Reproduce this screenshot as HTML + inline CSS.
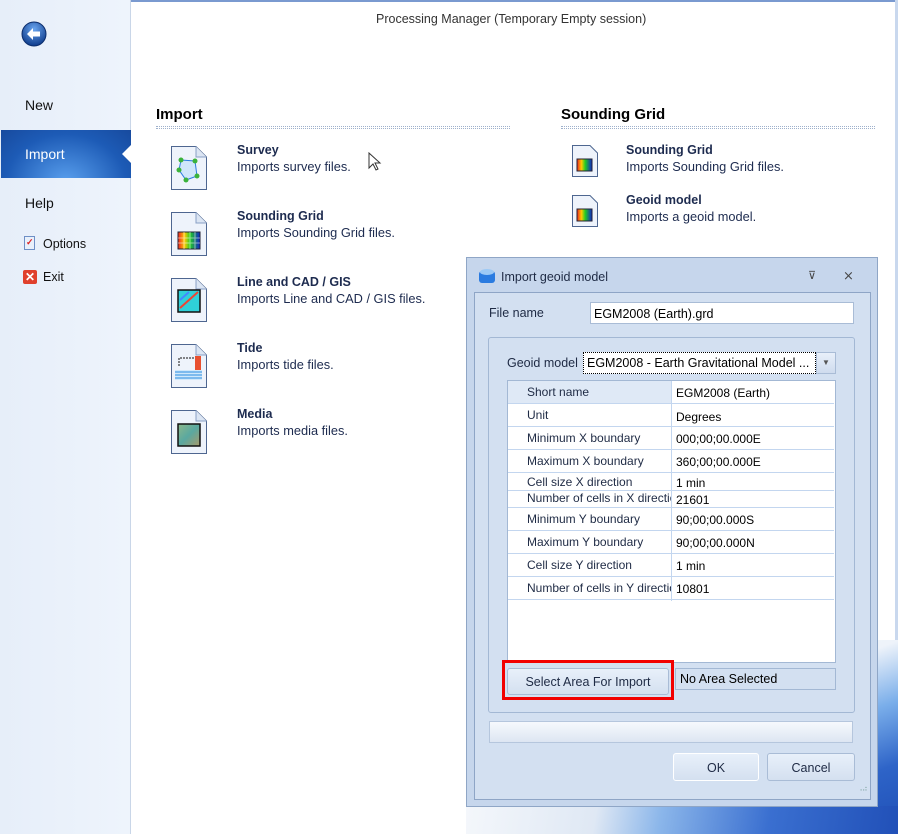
<!DOCTYPE html>
<html><head><style>
*{margin:0;padding:0;box-sizing:border-box}
body{width:898px;height:834px;position:relative;overflow:hidden;background:#fff;font-family:"Liberation Sans",sans-serif;font-size:12px;color:#1e2a44}
.a{position:absolute}
.side{left:0;top:0;width:131px;height:834px;background:linear-gradient(90deg,#e6eef9,#eef4fc);border-right:1px solid #c9d6e8}
.nav{left:25px;font-size:14px;color:#111}
.h{font-weight:bold;font-size:15px;color:#000}
.dots{height:3px;border-top:1px dotted #9fb1cc;border-bottom:1px dotted #9fb1cc}
.t{font-weight:bold;font-size:12.5px;color:#1d2b4f}
.d{font-size:12.8px;color:#1d2b4f}
.doc{width:36px;height:44px}
.row{left:508px;width:326px;border-bottom:1px solid #c3d6ef;font-size:12px;color:#1e2a44}
.row span{position:absolute;left:19px}
.row b{position:absolute;left:168px;font-weight:normal;color:#000}
.btn{background:linear-gradient(#e8f0fa,#d4e0f0);border:1px solid #a9bcd6;border-radius:3px;text-align:center;font-size:12.5px;color:#1e2a44}
</style></head><body>
<div class="a" style="left:0;top:0;width:898px;height:2px;background:#7a9ad0"></div>
<div class="a" style="right:0;top:0;width:3px;height:834px;background:#c9d8ee"></div>
<div class="a side"></div>
<svg class="a" style="left:20px;top:20px" width="28" height="28"><defs><radialGradient id="g" cx="50%" cy="30%" r="70%"><stop offset="0" stop-color="#6aa6f0"/><stop offset="1" stop-color="#0d3a8a"/></radialGradient></defs><circle cx="14" cy="14" r="12" fill="url(#g)" stroke="#0b2d6c"/><path d="M7 14 L13 8 V11.5 H20 V16.5 H13 V20 Z" fill="#fff"/></svg>
<div class="a nav" style="top:97px">New</div>
<div class="a" style="left:1px;top:130px;width:130px;height:48px;background:radial-gradient(ellipse at 50% 110%,#5aa0ee,#1d5bb6 65%,#174a9e)"></div>
<div class="a nav" style="top:146px;color:#fff">Import</div>
<div class="a" style="left:122px;top:145px;width:0;height:0;border-top:9px solid transparent;border-bottom:9px solid transparent;border-right:9px solid #fff"></div>
<div class="a nav" style="top:195px">Help</div>
<div class="a" style="left:24px;top:236px;width:11px;height:14px;background:#e8f0fb;border:1px solid #6e8fc6"></div>
<div class="a" style="left:26px;top:237px;font-size:9px;color:#d22;font-weight:bold">✓</div>
<div class="a" style="left:43px;top:237px;font-size:12.5px;color:#111">Options</div>
<div class="a" style="left:23px;top:270px;width:14px;height:14px;background:#e0402c;border-radius:2px;color:#fff;font-size:12px;line-height:14px;text-align:center;font-weight:bold">✕</div>
<div class="a" style="left:43px;top:270px;font-size:12.5px;color:#111">Exit</div>

<div class="a" style="left:376px;top:12px;font-size:12.5px;color:#333">Processing Manager (Temporary Empty session)</div>

<div class="a h" style="left:156px;top:106px">Import</div>
<div class="a dots" style="left:156px;top:126px;width:354px"></div>
<div class="a h" style="left:561px;top:106px">Sounding Grid</div>
<div class="a dots" style="left:561px;top:126px;width:314px"></div>

<svg width="0" height="0" style="position:absolute"><defs><symbol id="doc" viewBox="0 0 36 44"><path d="M0.5 0.5 H25 L35.5 11 V43.5 H0.5 Z" fill="#eef3fb" stroke="#4e6690"/><path d="M25 0.5 V11 H35.5" fill="#dbe5f3" stroke="#8aa0c4"/></symbol></defs></svg>

<svg class="a doc" style="left:171px;top:146px"><use href="#doc"/><path d="M10 14 L24 15 L26 30 L15 34 L8 24Z" fill="#cfe6fb" stroke="#2c7be0"/><g fill="#3bb33b"><circle cx="10" cy="14" r="2.5"/><circle cx="24" cy="15" r="2.5"/><circle cx="8" cy="24" r="2.5"/><circle cx="26" cy="30" r="2.5"/><circle cx="15" cy="34" r="2.5"/></g></svg>
<div class="a t" style="left:237px;top:143px">Survey</div><div class="a d" style="left:237px;top:159px">Imports survey files.</div>
<svg class="a" style="left:368px;top:152px" width="14" height="20"><path d="M1 1 V16 L5 12 L8 18 L10 17 L7 11 H12 Z" fill="#fff" stroke="#333"/></svg>

<svg class="a doc" style="left:171px;top:212px"><defs><linearGradient id="rb" x1="0" x2="1"><stop offset="0" stop-color="#e22"/><stop offset=".3" stop-color="#fc0"/><stop offset=".55" stop-color="#2c2"/><stop offset="1" stop-color="#12c"/></linearGradient></defs><use href="#doc"/><rect x="7" y="20" width="22" height="17" fill="url(#rb)" stroke="#223"/><path d="M7 26H29M7 31H29M13 20V37M19 20V37M24 20V37" stroke="#fff" stroke-opacity=".5"/></svg>
<div class="a t" style="left:237px;top:209px">Sounding Grid</div><div class="a d" style="left:237px;top:225px">Imports Sounding Grid files.</div>

<svg class="a doc" style="left:171px;top:278px"><use href="#doc"/><rect x="7" y="12" width="22" height="22" fill="#2fd0d8" stroke="#111" stroke-width="1.5"/><path d="M9 30 L27 14" stroke="#e43" stroke-width="2"/><path d="M9 22 L18 14" stroke="#48f" stroke-width="2"/></svg>
<div class="a t" style="left:237px;top:275px">Line and CAD / GIS</div><div class="a d" style="left:237px;top:291px">Imports Line and CAD / GIS files.</div>

<svg class="a doc" style="left:171px;top:344px"><use href="#doc"/><rect x="24" y="12" width="6" height="14" fill="#e85030"/><path d="M8 22 V14 H24" stroke="#111" stroke-dasharray="2 1" fill="none"/><rect x="4" y="26" width="27" height="10" fill="#cfe8fb"/><path d="M4 28 H31 M4 31 H31 M4 34 H31" stroke="#2a8de0"/></svg>
<div class="a t" style="left:237px;top:341px">Tide</div><div class="a d" style="left:237px;top:357px">Imports tide files.</div>

<svg class="a doc" style="left:171px;top:410px"><defs><linearGradient id="md" x1="0" y1="0" x2="1" y2="1"><stop offset="0" stop-color="#8cb88a"/><stop offset=".5" stop-color="#5aa8a0"/><stop offset="1" stop-color="#a89a6a"/></linearGradient></defs><use href="#doc"/><rect x="7" y="14" width="22" height="22" fill="url(#md)" stroke="#111" stroke-width="1.5"/></svg>
<div class="a t" style="left:237px;top:407px">Media</div><div class="a d" style="left:237px;top:423px">Imports media files.</div>

<svg class="a" style="left:572px;top:145px" width="26" height="32"><path d="M0.5 .5H18L25.5 8V31.5H.5Z" fill="#eef3fb" stroke="#4e6690"/><rect x="5" y="14" width="15" height="12" fill="url(#rb)" stroke="#223"/></svg>
<div class="a t" style="left:626px;top:143px">Sounding Grid</div><div class="a d" style="left:626px;top:159px">Imports Sounding Grid files.</div>
<svg class="a" style="left:572px;top:195px" width="26" height="32"><path d="M0.5 .5H18L25.5 8V31.5H.5Z" fill="#eef3fb" stroke="#4e6690"/><rect x="5" y="14" width="15" height="12" fill="url(#rb)" stroke="#223"/></svg>
<div class="a t" style="left:626px;top:193px">Geoid model</div><div class="a d" style="left:626px;top:209px">Imports a geoid model.</div>

<!-- desktop background -->
<div class="a" style="left:466px;top:640px;width:432px;height:194px;background:linear-gradient(160deg,#ffffff 0%,#eef3fa 45%,#7aaeea 62%,#2e64c8 80%,#1f4fb6 100%)"></div>
<div class="a" style="left:466px;top:806px;width:432px;height:28px;background:linear-gradient(100deg,#f4f7fb 0%,#dfe8f4 30%,#8bb6ea 45%,#3a6fd0 70%,#2150b8 100%)"></div>

<!-- dialog -->
<div class="a" style="left:466px;top:257px;width:412px;height:550px;background:#c6d6ec;border:1px solid #8fa6c6"></div>
<div class="a" style="left:474px;top:292px;width:397px;height:508px;background:#d3e0f1;border:1px solid #8ea5c6"></div>
<svg class="a" style="left:478px;top:267px" width="18" height="18"><rect x="1" y="4" width="16" height="12" rx="3" fill="#2a7be0"/><ellipse cx="9" cy="5" rx="7" ry="3" fill="#9cc9f5"/></svg>
<div class="a" style="left:501px;top:270px;font-size:12.5px;color:#1e2a44">Import geoid model</div>
<div class="a" style="left:808px;top:269px;font-size:11px;color:#444">⊽</div>
<div class="a" style="left:843px;top:268px;font-size:13px;color:#444">⨯</div>
<div class="a" style="left:489px;top:306px;font-size:12.5px">File name</div>
<div class="a" style="left:590px;top:302px;width:264px;height:22px;background:#fff;border:1px solid #a9bcd6;padding:4px 3px;font-size:12.5px;color:#000">EGM2008 (Earth).grd</div>
<div class="a" style="left:488px;top:337px;width:367px;height:376px;border:1px solid #a3b8d4;border-radius:3px"></div>
<div class="a" style="left:507px;top:356px;font-size:12.5px">Geoid model</div>
<div class="a" style="left:583px;top:352px;width:233px;height:22px;background:#fff;border:1px dotted #000;padding:3px 3px;font-size:12.5px;color:#000;white-space:nowrap;overflow:hidden">EGM2008 - Earth Gravitational Model ...</div>
<div class="a" style="left:816px;top:352px;width:20px;height:22px;background:linear-gradient(#e8f0fa,#cfdcee);border:1px solid #a9bcd6;font-size:8px;text-align:center;line-height:20px;color:#555">▼</div>
<div class="a" style="left:507px;top:380px;width:329px;height:283px;background:#fff;border:1px solid #a3b8d4"></div>
<div class="a" style="left:508px;top:381px;width:163px;height:23px;background:#dfe9f6"></div>
<div class="a" style="left:671px;top:381px;width:1px;height:220px;background:#c3d6ef"></div>
<div class="a row" style="top:381px;height:23px"><span style="top:4px">Short name</span><b style="top:5px">EGM2008 (Earth)</b></div>
<div class="a row" style="top:404px;height:23px"><span style="top:4px">Unit</span><b style="top:6px">Degrees</b></div>
<div class="a row" style="top:427px;height:23px"><span style="top:4px">Minimum X boundary</span><b style="top:5px">000;00;00.000E</b></div>
<div class="a row" style="top:450px;height:23px"><span style="top:4px">Maximum X boundary</span><b style="top:5px">360;00;00.000E</b></div>
<div class="a row" style="top:473px;height:18px"><span style="top:2px">Cell size X direction</span><b style="top:3px">1 min</b></div>
<div class="a row" style="top:491px;height:17px"><span style="top:0px;width:144px;overflow:hidden;white-space:nowrap">Number of cells in X direction</span><b style="top:2px">21601</b></div>
<div class="a row" style="top:508px;height:23px"><span style="top:4px">Minimum Y boundary</span><b style="top:5px">90;00;00.000S</b></div>
<div class="a row" style="top:531px;height:23px"><span style="top:4px">Maximum Y boundary</span><b style="top:5px">90;00;00.000N</b></div>
<div class="a row" style="top:554px;height:23px"><span style="top:4px">Cell size Y direction</span><b style="top:5px">1 min</b></div>
<div class="a row" style="top:577px;height:23px"><span style="top:4px;width:144px;overflow:hidden;white-space:nowrap">Number of cells in Y direction</span><b style="top:5px">10801</b></div>
<div class="a" style="left:502px;top:660px;width:172px;height:40px;border:3px solid #f20000"></div>
<div class="a btn" style="left:507px;top:668px;width:162px;height:27px;line-height:26px">Select Area For Import</div>
<div class="a" style="left:675px;top:668px;width:161px;height:22px;border:1px solid #a3b8d4;padding:3px 4px;font-size:12.5px;color:#000">No Area Selected</div>
<div class="a" style="left:489px;top:721px;width:364px;height:22px;background:linear-gradient(#f6f9fd,#dde6f2);border:1px solid #b5c6dd"></div>
<div class="a btn" style="left:673px;top:753px;width:86px;height:28px;line-height:28px;border-color:#fff">OK</div>
<div class="a btn" style="left:767px;top:753px;width:88px;height:28px;line-height:28px">Cancel</div>
<div class="a" style="left:857px;top:784px;font-size:8px;color:#8aa;letter-spacing:-1px">⠠⠴</div>
</body></html>
